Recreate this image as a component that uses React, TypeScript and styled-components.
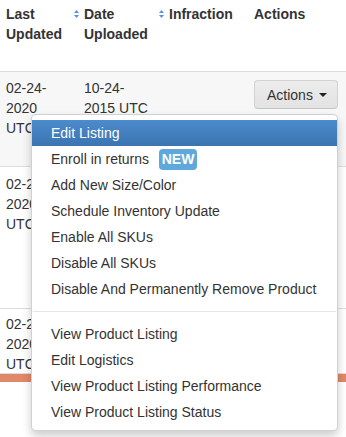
import styled, { createGlobalStyle } from "styled-components";

const GlobalStyle = createGlobalStyle`
  html, body {
    margin: 0;
    padding: 0;
    background: #fff;
  }
  body {
    font-family: "Liberation Sans", Arial, Helvetica, sans-serif;
    font-size: 14px;
    line-height: 20px;
    color: #333;
  }
`;

const menuTop = [
  "Edit Listing",
  "Enroll in returns",
  "Add New Size/Color",
  "Schedule Inventory Update",
  "Enable All SKUs",
  "Disable All SKUs",
  "Disable And Permanently Remove Product",
];

const menuBottom = [
  "View Product Listing",
  "Edit Logistics",
  "View Product Listing Performance",
  "View Product Listing Status",
];

// rows 2 and 3 sit behind the open menu, only the first column peeks out
const rows = [
  { updated: ["02-24-", "2020", "UTC"], uploaded: ["10-24-", "2015 UTC"], height: 95, striped: true, top: 6 },
  { updated: ["02-24-", "2020", "UTC"], uploaded: [], height: 142, striped: false, top: 7 },
  { updated: ["02-24-", "2020", "UTC"], uploaded: [], height: 65, striped: false, top: 5 },
];

const SortIcon = () => (
  <svg width="5" height="8" viewBox="0 0 5 8">
    <path d="M2.5 0 L5 3 L0 3 Z" fill="#5b8fe0" />
    <path d="M2.5 8 L5 5 L0 5 Z" fill="#5b8fe0" />
  </svg>
);

export default function App() {
  return (
    <Page>
      <GlobalStyle />
      <HeaderRow>
        <HeadCell>
          <span>
            Last
            <br />
            Updated
          </span>
          <SortMark>
            <SortIcon />
          </SortMark>
        </HeadCell>
        <HeadCell>
          <span>
            Date
            <br />
            Uploaded
          </span>
          <SortMark>
            <SortIcon />
          </SortMark>
        </HeadCell>
        <HeadCell>
          <span>Infraction</span>
        </HeadCell>
        <HeadCell>
          <span>Actions</span>
        </HeadCell>
      </HeaderRow>

      {rows.map((r, i) => (
        <BodyRow key={i} $striped={r.striped} $height={r.height} $top={r.top}>
          <Cell>
            {r.updated.map((l) => (
              <div key={l}>{l}</div>
            ))}
          </Cell>
          <Cell>
            {r.uploaded.map((l) => (
              <div key={l}>{l}</div>
            ))}
          </Cell>
          <Cell />
          <ActionCell>
            <ButtonGroup>
              <ActionsButton>
                Actions <Caret />
              </ActionsButton>
              {i === 0 && (
                <Menu>
                  {menuTop.map((m, j) => (
                    <MenuItem key={m} $active={j === 0}>
                      {m}
                      {m === "Enroll in returns" && <NewBadge>NEW</NewBadge>}
                    </MenuItem>
                  ))}
                  <Divider />
                  {menuBottom.map((m) => (
                    <MenuItem key={m}>{m}</MenuItem>
                  ))}
                </Menu>
              )}
            </ButtonGroup>
          </ActionCell>
        </BodyRow>
      ))}
      <ProgressBar />
    </Page>
  );
}

const Page = styled.div`
  position: relative;
  width: 346px;
  height: 437px;
  overflow: hidden;
`;

const columns = `80px 85px 85px 1fr`;

const HeaderRow = styled.div`
  display: grid;
  grid-template-columns: ${columns};
  box-sizing: border-box;
  height: 72px;
  border-bottom: 1px solid #dddddd;
`;

const HeadCell = styled.div`
  display: flex;
  justify-content: space-between;
  align-items: flex-start;
  padding: 4px 1px 0 4px;
  font-weight: bold;
  color: #333;
  &:first-child {
    padding-left: 6px;
  }
`;

const SortMark = styled.span`
  display: flex;
  padding-top: 6px;
`;

const BodyRow = styled.div<{ $striped: boolean; $height: number; $top: number }>`
  display: grid;
  grid-template-columns: ${columns};
  padding-top: ${(p) => p.$top}px;
  box-sizing: border-box;
  height: ${(p) => p.$height}px;
  background: ${(p) => (p.$striped ? "#f7f7f7" : "#fff")};
  border-bottom: 1px solid #dddddd;
  &:last-of-type {
    border-bottom: none;
  }
`;

const Cell = styled.div`
  padding-left: 4px;
  &:first-child {
    padding-left: 6px;
  }
`;

const ActionCell = styled.div`
  display: flex;
  justify-content: flex-end;
  align-items: flex-start;
  padding: 2px 8px 0 0;
`;

const ButtonGroup = styled.div`
  position: relative;
`;

const ActionsButton = styled.button`
  display: flex;
  align-items: center;
  gap: 4px;
  height: 29px;
  width: 84px;
  padding: 0 11px 0 12px;
  box-sizing: border-box;
  font-family: "Liberation Sans", Arial, Helvetica, sans-serif;
  font-size: 14px;
  color: #333;
  background: linear-gradient(#ececec, #e3e3e3);
  border: 1px solid #d2d2d2;
  border-bottom-color: #c4c4c4;
  border-radius: 4px;
`;

const Caret = styled.span`
  display: inline-block;
  width: 0;
  height: 0;
  margin-left: 2px;
  border-left: 4px solid transparent;
  border-right: 4px solid transparent;
  border-top: 4px solid #222;
`;

const Menu = styled.div`
  position: absolute;
  top: calc(100% + 5px);
  right: 0;
  z-index: 10;
  width: 307px;
  box-sizing: border-box;
  padding: 5px 0;
  background: #fff;
  border: 1px solid rgba(0, 0, 0, 0.18);
  border-radius: 5px;
  box-shadow: 0 5px 10px rgba(0, 0, 0, 0.2);
`;

const MenuItem = styled.div<{ $active?: boolean }>`
  display: flex;
  align-items: center;
  height: 26px;
  padding: 0 19px;
  white-space: nowrap;
  color: ${(p) => (p.$active ? "#fff" : "#333")};
  background: ${(p) => (p.$active ? "linear-gradient(#4c8bcd, #3b74b1)" : "transparent")};
`;

const NewBadge = styled.span`
  display: inline-flex;
  align-items: center;
  justify-content: center;
  margin-left: 10px;
  width: 38px;
  height: 21px;
  border-radius: 4px;
  background: #5ea8dc;
  color: #fff;
  font-weight: bold;
  font-size: 14px;
`;

const Divider = styled.div`
  height: 1px;
  margin: 9px 1px;
  background: #e5e5e5;
`;

const ProgressBar = styled.div`
  height: 8px;
  background: #e0886a;
`;
